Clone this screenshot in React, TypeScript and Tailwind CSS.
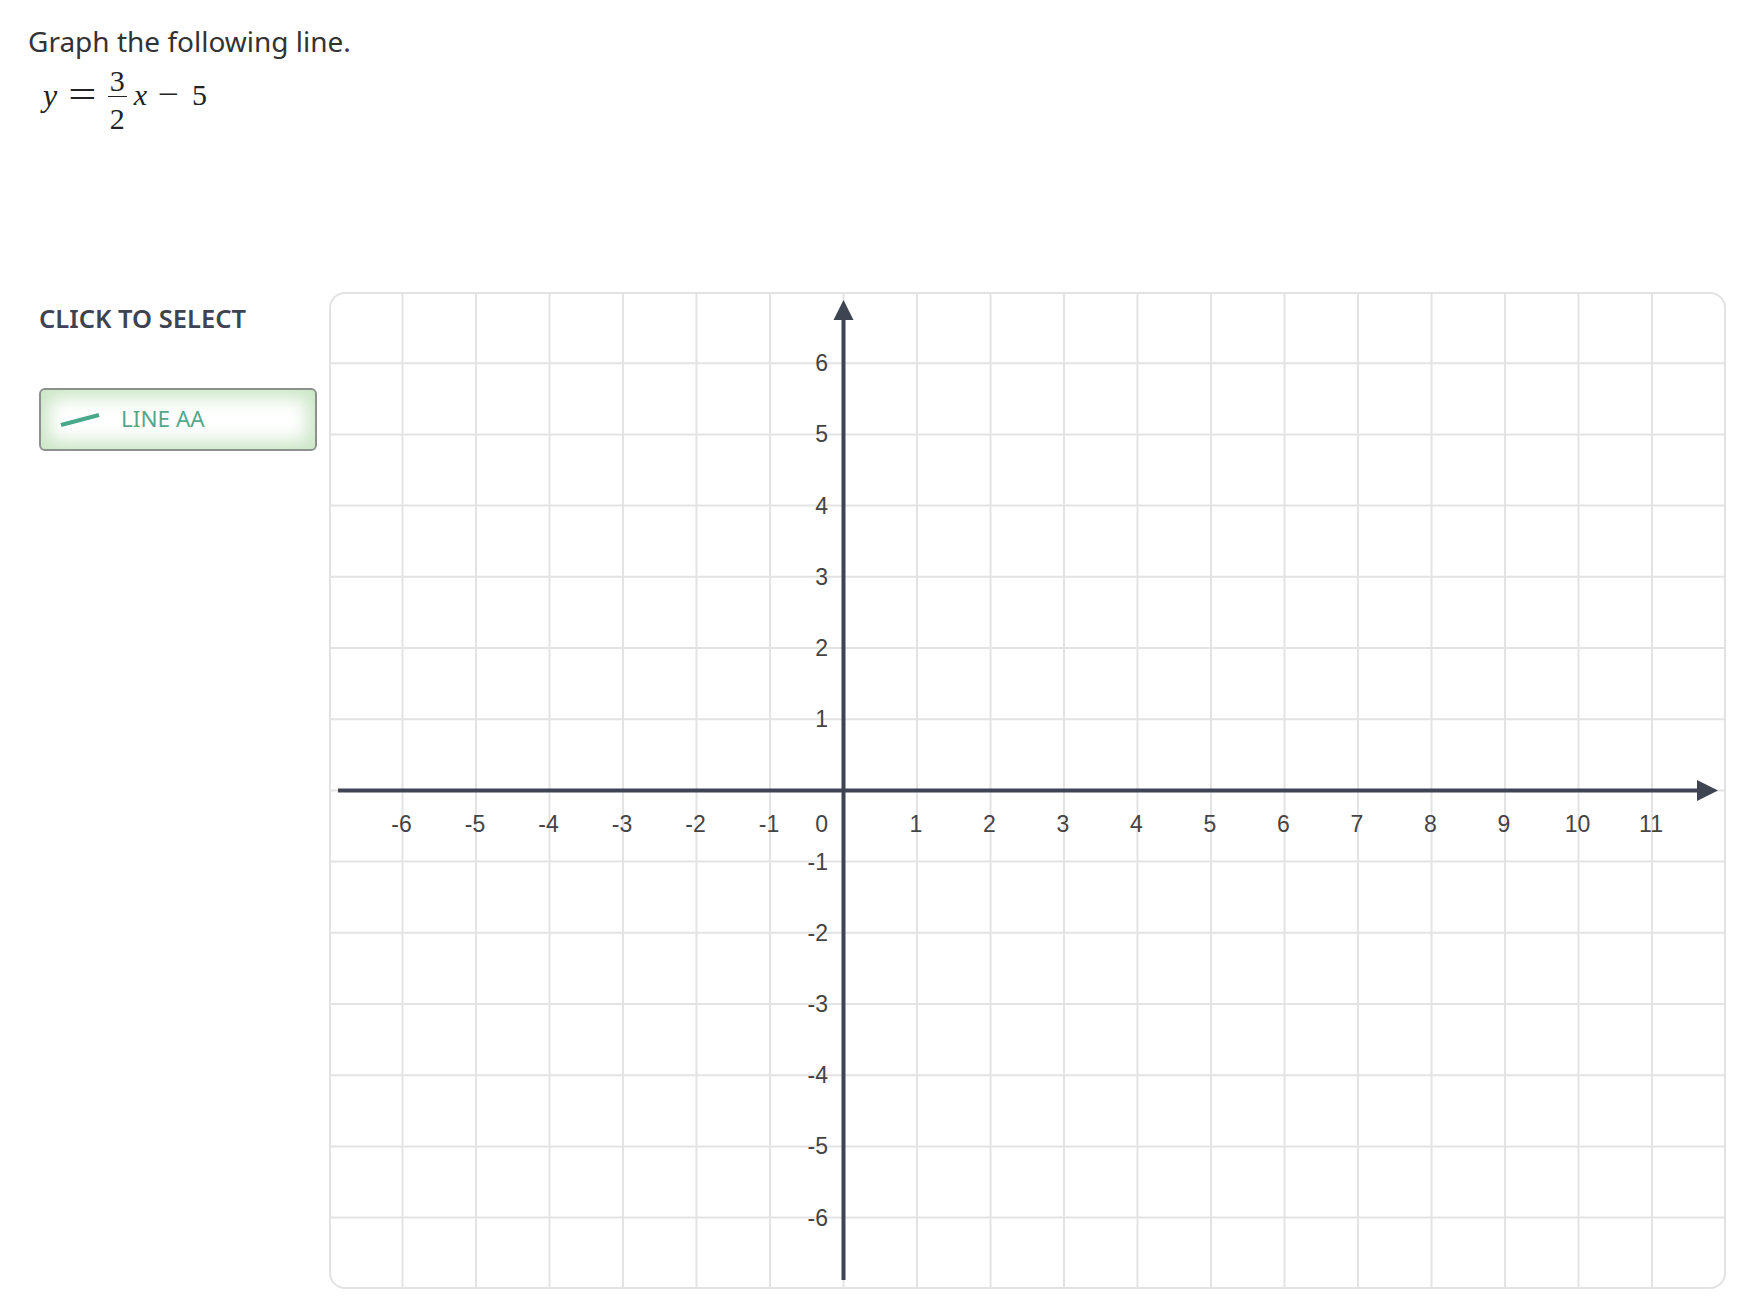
import React from "react";

const UX = 73.5;
const UY = 71.2;
const W = 1397;
const H = 997;
const B = 2; // border width of the graph box

// outer box coordinates -> svg coordinates
const px = (x: number) => (x + 7) * UX - B;
const py = (y: number) => (7 - y) * UY - B;

const AXIS = "#3e4452";
const GRID = "#e3e3e3";
const LABEL = "#444444";

function Graph() {
  const xs: number[] = [];
  for (let i = -6; i <= 11; i++) xs.push(i);
  const ys: number[] = [];
  for (let j = -6; j <= 6; j++) ys.push(j);

  return (
    <div className="w-[1397px] h-[997px] rounded-[16px] border-2 border-[#e2e2e2] overflow-hidden bg-white">
      <svg width={W - 2 * B} height={H - 2 * B} className="block">
        {xs.map((i) => (
          <line key={"v" + i} x1={px(i)} x2={px(i)} y1={0} y2={H} stroke={GRID} strokeWidth={2} />
        ))}
        {ys.map((j) => (
          <line key={"h" + j} x1={0} x2={W} y1={py(j)} y2={py(j)} stroke={GRID} strokeWidth={2} />
        ))}

        {/* x axis */}
        <line x1={9 - B} x2={1370 - B} y1={py(0)} y2={py(0)} stroke={AXIS} strokeWidth={4} />
        <polygon
          points={`${1368 - B},${py(0) - 10.5} ${1389 - B},${py(0)} ${1368 - B},${py(0) + 10.5}`}
          fill={AXIS}
        />
        {/* y axis */}
        <line x1={px(0)} x2={px(0)} y1={26 - B} y2={988 - B} stroke={AXIS} strokeWidth={4} />
        <polygon
          points={`${px(0) - 10},${28 - B} ${px(0)},${8 - B} ${px(0) + 10},${28 - B}`}
          fill={AXIS}
        />

        <g fontFamily="'Liberation Sans', Arial, sans-serif" fontSize={23} fill={LABEL}>
          {xs
            .filter((i) => i !== 0)
            .map((i) => (
              <text key={"xl" + i} x={px(i) - 1} y={py(0) + 34} textAnchor="middle" dominantBaseline="central">
                {i}
              </text>
            ))}
          <text x={499 - B} y={py(0) + 34} textAnchor="end" dominantBaseline="central">
            0
          </text>
          {ys
            .filter((j) => j !== 0)
            .map((j) => (
              <text key={"yl" + j} x={499 - B} y={py(j)} textAnchor="end" dominantBaseline="central">
                {j}
              </text>
            ))}
        </g>
      </svg>
    </div>
  );
}

function Equation() {
  return (
    <div className="mt-[3px] flex h-[66px] items-center pl-[43px] [font-family:'Liberation_Serif',serif] text-[30px] leading-none text-[#222]">
      <span className="text-[32px] italic">y</span>
      <span className="ml-[14px] scale-x-125 text-[40px]">=</span>
      <span className="ml-[14px] inline-flex translate-y-[5px] flex-col items-center">
        <span className="leading-none">3</span>
        <span className="h-[1.5px] w-[19px] bg-[#222]" />
        <span className="mt-[7px] leading-none">2</span>
      </span>
      <span className="ml-[7px] italic">x</span>
      <span className="ml-[13px] -translate-y-[1px] scale-x-125">−</span>
      <span className="ml-[15px]">5</span>
    </div>
  );
}

export default function App() {
  return (
    <main className="min-h-screen bg-white [font-family:'Noto_Sans','Open_Sans',sans-serif] text-[#333]">
      <div className="pt-[23px] pl-[28px]">
        <h1 className="text-[28px] leading-[36px] text-[#333]">Graph the following line.</h1>
      </div>
      <Equation />

      <div className="mt-[164px] flex items-start pl-[39px]">
        <div className="w-[278px] shrink-0">
          <div className="pt-[10px] text-[25.5px] font-semibold leading-[32px] text-[#3f4350]">CLICK TO SELECT</div>
          <button className="mt-[54px] flex h-[63px] w-[278px] items-center rounded-[6px] border-2 border-[#8c918e] bg-white pl-[19px] shadow-[inset_0_0_18px_8px_#cbe6c6]">
            <svg width="40" height="14" viewBox="0 0 40 14">
              <line x1="1" y1="12" x2="39" y2="2" stroke="#4aa88a" strokeWidth="4" />
            </svg>
            <span className="ml-[21px] text-[22.5px] leading-none text-[#52a88b]">LINE AA</span>
          </button>
        </div>
        <div className="ml-[12px]">
          <Graph />
        </div>
      </div>
    </main>
  );
}
